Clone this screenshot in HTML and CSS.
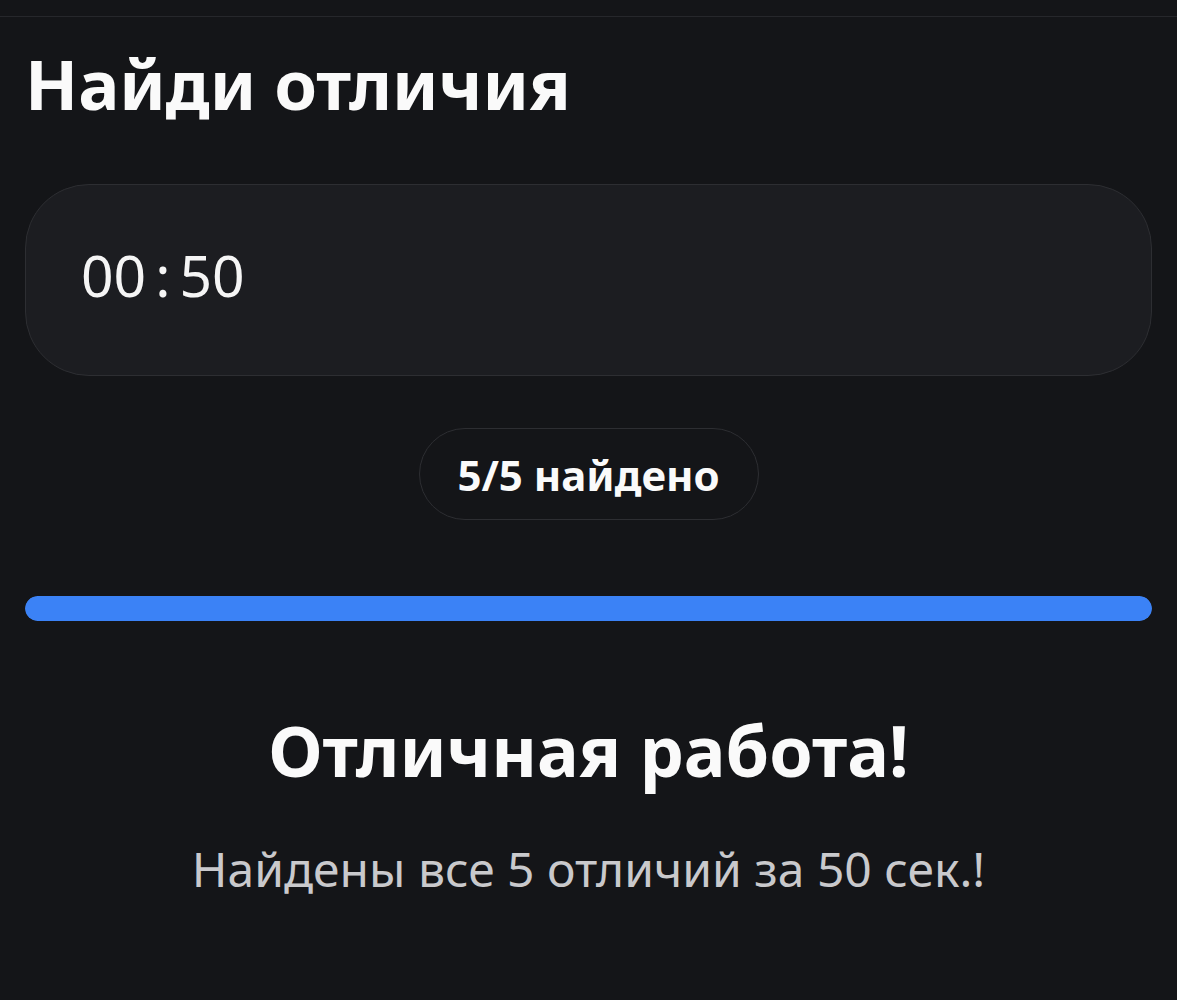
FILE: index.html
```html
<!DOCTYPE html>
<html lang="ru">
<head>
<meta charset="UTF-8">
<meta name="viewport" content="width=device-width, initial-scale=1.0">
<title>Найди отличия</title>
<link rel="stylesheet" href="styles.css">
</head>
<body>

<div class="topbar"></div>

<div class="container">
    <h1 class="title">Найди отличия</h1>

    <div class="timer-card">
        <span class="timer">00<span class="colon">:</span>50</span>
    </div>

    <div class="counter-row">
        <div class="counter">5/5 найдено</div>
    </div>

    <div class="progress">
        <div class="progress-fill" style="width: 100%"></div>
    </div>

    <div class="result">
        <h2>Отличная работа!</h2>
        <p>Найдены все 5 отличий за 50 сек.!</p>
    </div>
</div>

</body>
</html>
```

FILE: styles.css
```css
body {
    margin: 0;
    font-family: "Noto Sans", Roboto, Arial, sans-serif;
    background-color: #141518;
    color: #fafafa;
}
.topbar {
    height: 16px;
    border-bottom: 1px solid #26272b;
}
.container {
    padding: 0 25px;
}
.title {
    margin: 0;
    padding-top: 26px;
    font-size: 69px;
    line-height: 80px;
    font-weight: 700;
}
.timer-card {
    box-sizing: border-box;
    margin-top: 61px;
    height: 192px;
    display: flex;
    align-items: center;
    padding: 0 0 10px 55px;
    background-color: #1c1d21;
    border: 1px solid #2d2e32;
    border-radius: 64px;
}
.timer {
    font-size: 57px;
    font-variant-numeric: tabular-nums;
    color: #f5f5f5;
}
.timer .colon {
    margin: 0 9px;
}
.counter-row {
    display: flex;
    justify-content: center;
    margin-top: 52px;
}
.counter {
    box-sizing: border-box;
    display: flex;
    align-items: center;
    justify-content: center;
    width: 340px;
    height: 92px;
    border: 1px solid #2d2e32;
    border-radius: 46px;
    background-color: #141518;
    font-size: 42px;
    font-weight: 700;
}
.progress {
    margin-top: 76px;
    height: 25px;
    border-radius: 13px;
    background-color: #26272b;
    overflow: hidden;
}
.progress-fill {
    height: 100%;
    background-color: #3b82f6;
    border-radius: 13px;
}
.result {
    text-align: center;
    padding-top: 89px;
}
.result h2 {
    margin: 0;
    font-size: 70px;
    line-height: 80px;
    font-weight: 700;
}
.result p {
    margin: 49px 0 0;
    font-size: 48px;
    line-height: 60px;
    color: #c9c9cc;
}
```
